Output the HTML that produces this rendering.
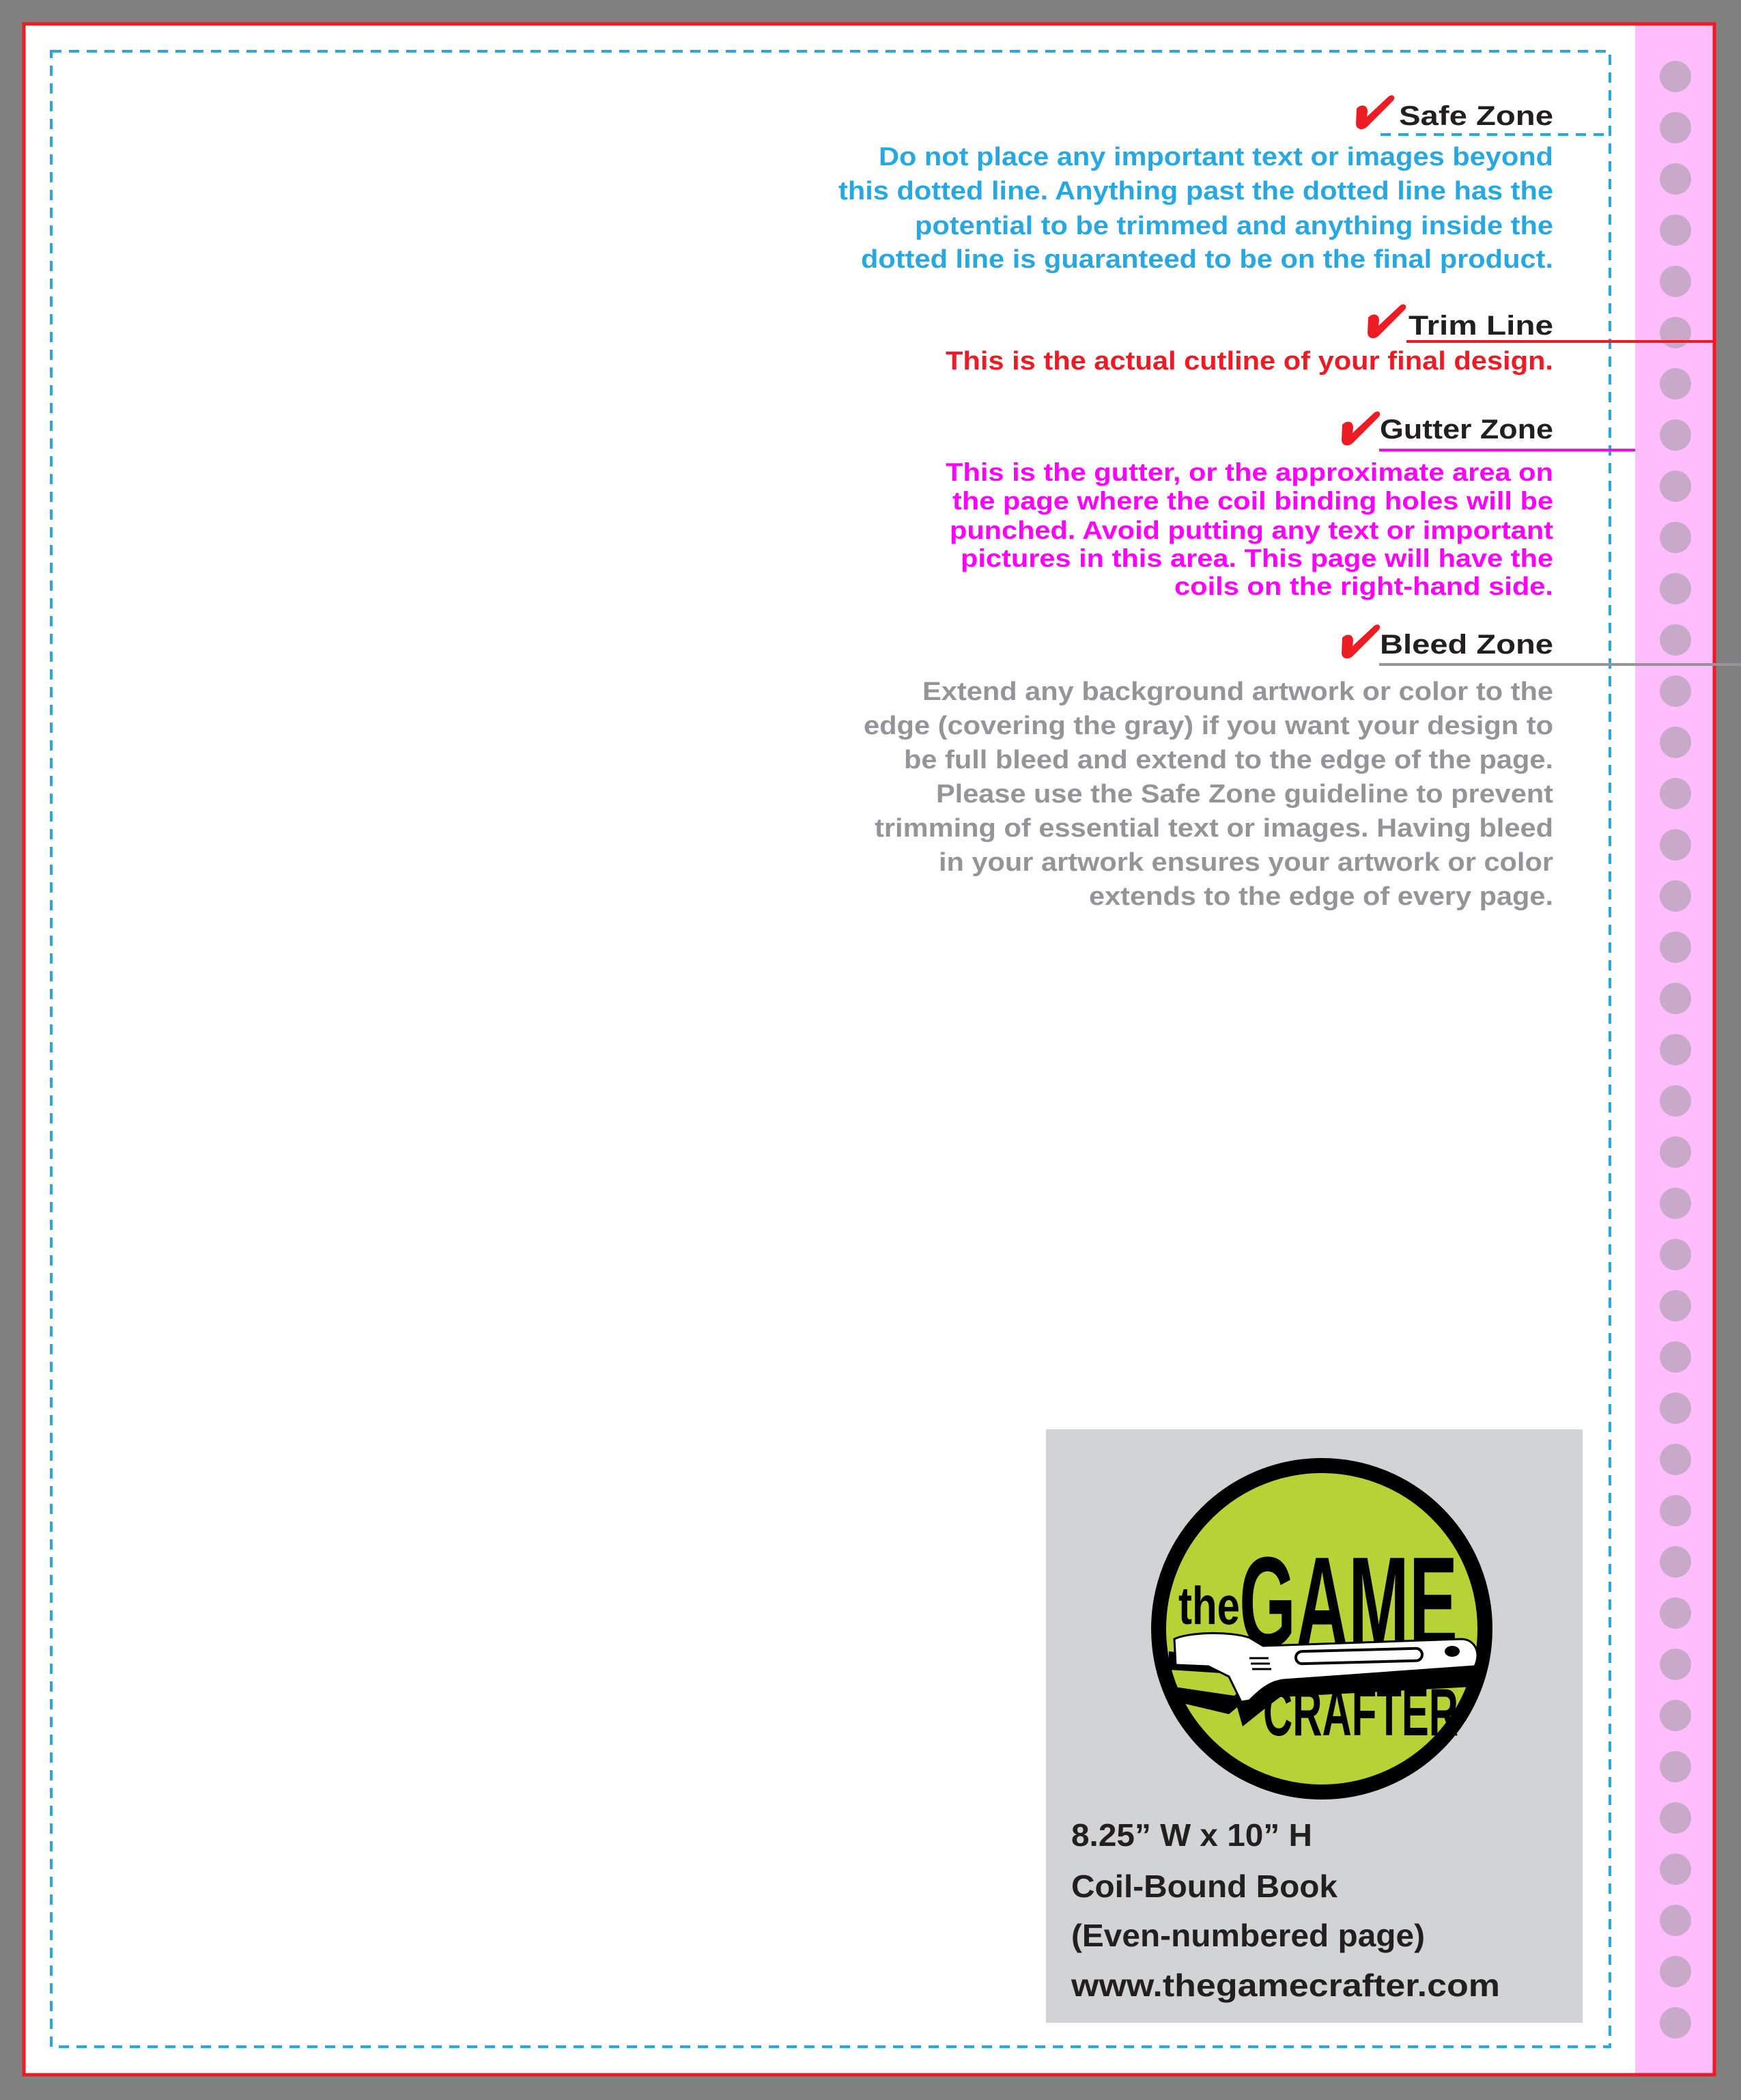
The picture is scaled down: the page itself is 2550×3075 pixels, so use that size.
<!DOCTYPE html>
<html><head><meta charset="utf-8"><style>
html,body{margin:0;padding:0;background:#808080;}
svg{display:block}
text{font-family:"Liberation Sans",Arial,sans-serif;font-weight:bold}
</style></head><body>
<svg width="2550" height="3075" viewBox="0 0 2550 3075" xmlns="http://www.w3.org/2000/svg">
<rect x="0" y="0" width="2550" height="3075" fill="#808080"/>
<rect x="35" y="35" width="2476" height="3003" fill="#ffffff"/>
<rect x="2395" y="35" width="116" height="3003" fill="#ffbdfb"/>
<g fill="#c9a9c9">
<circle cx="2454" cy="112" r="23"/><circle cx="2454" cy="187" r="23"/><circle cx="2454" cy="262" r="23"/><circle cx="2454" cy="337" r="23"/><circle cx="2454" cy="412" r="23"/><circle cx="2454" cy="487" r="23"/><circle cx="2454" cy="562" r="23"/><circle cx="2454" cy="637" r="23"/><circle cx="2454" cy="712" r="23"/><circle cx="2454" cy="787" r="23"/><circle cx="2454" cy="862" r="23"/><circle cx="2454" cy="937" r="23"/><circle cx="2454" cy="1012" r="23"/><circle cx="2454" cy="1087" r="23"/><circle cx="2454" cy="1162" r="23"/><circle cx="2454" cy="1237" r="23"/><circle cx="2454" cy="1312" r="23"/><circle cx="2454" cy="1387" r="23"/><circle cx="2454" cy="1462" r="23"/><circle cx="2454" cy="1537" r="23"/><circle cx="2454" cy="1612" r="23"/><circle cx="2454" cy="1687" r="23"/><circle cx="2454" cy="1762" r="23"/><circle cx="2454" cy="1837" r="23"/><circle cx="2454" cy="1912" r="23"/><circle cx="2454" cy="1987" r="23"/><circle cx="2454" cy="2062" r="23"/><circle cx="2454" cy="2137" r="23"/><circle cx="2454" cy="2212" r="23"/><circle cx="2454" cy="2287" r="23"/><circle cx="2454" cy="2362" r="23"/><circle cx="2454" cy="2437" r="23"/><circle cx="2454" cy="2512" r="23"/><circle cx="2454" cy="2587" r="23"/><circle cx="2454" cy="2662" r="23"/><circle cx="2454" cy="2737" r="23"/><circle cx="2454" cy="2812" r="23"/><circle cx="2454" cy="2887" r="23"/><circle cx="2454" cy="2962" r="23"/>
</g>
<rect x="35" y="35" width="2476" height="3003" fill="none" stroke="#ed1c24" stroke-width="5"/>
<rect x="75" y="75" width="2283" height="2922" fill="none" stroke="#29a8e0" stroke-width="4" stroke-dasharray="15 11"/>
<line x1="2022" y1="197" x2="2358" y2="197" stroke="#29a8e0" stroke-width="4" stroke-dasharray="15 11"/>
<line x1="2060" y1="500" x2="2511" y2="500" stroke="#ed1c24" stroke-width="4"/>
<line x1="2020" y1="659" x2="2395" y2="659" stroke="#ff00ff" stroke-width="4"/>
<line x1="2020" y1="973" x2="2550" y2="973" stroke="#939598" stroke-width="4"/>
<g fill="#ed1c24">
<path transform="translate(1983,137)" d="M4,22 C10,15 20,16 20,26 L19,34 L50,5 C55,0 62,3 58,10 L20,48 C13,55 3,53 3,44 Z"/>
<path transform="translate(2000,443)" d="M4,22 C10,15 20,16 20,26 L19,34 L50,5 C55,0 62,3 58,10 L20,48 C13,55 3,53 3,44 Z"/>
<path transform="translate(1962,600)" d="M4,22 C10,15 20,16 20,26 L19,34 L50,5 C55,0 62,3 58,10 L20,48 C13,55 3,53 3,44 Z"/>
<path transform="translate(1962,912)" d="M4,22 C10,15 20,16 20,26 L19,34 L50,5 C55,0 62,3 58,10 L20,48 C13,55 3,53 3,44 Z"/>
</g>
<g text-anchor="end" fill="#231f20" font-size="40">
<text x="2275" y="183" textLength="226" lengthAdjust="spacingAndGlyphs">Safe Zone</text>
<text x="2275" y="490" textLength="212" lengthAdjust="spacingAndGlyphs">Trim Line</text>
<text x="2275" y="642" textLength="254" lengthAdjust="spacingAndGlyphs">Gutter Zone</text>
<text x="2275" y="957" textLength="254" lengthAdjust="spacingAndGlyphs">Bleed Zone</text>
</g>
<g text-anchor="end" fill="#29a8e0" font-size="38" lengthAdjust="spacingAndGlyphs">
<text x="2275" y="242" textLength="988" lengthAdjust="spacingAndGlyphs">Do not place any important text or images beyond</text>
<text x="2275" y="292" textLength="1047" lengthAdjust="spacingAndGlyphs">this dotted line. Anything past the dotted line has the</text>
<text x="2275" y="343" textLength="935" lengthAdjust="spacingAndGlyphs">potential to be trimmed and anything inside the</text>
<text x="2275" y="392" textLength="1014" lengthAdjust="spacingAndGlyphs">dotted line is guaranteed to be on the final product.</text>
</g>
<text x="2275" y="541" text-anchor="end" fill="#ed1c24" font-size="38" textLength="890" lengthAdjust="spacingAndGlyphs">This is the actual cutline of your final design.</text>
<g text-anchor="end" fill="#ff00ff" font-size="37">
<text x="2275" y="704" textLength="890" lengthAdjust="spacingAndGlyphs">This is the gutter, or the approximate area on</text>
<text x="2275" y="746" textLength="880" lengthAdjust="spacingAndGlyphs">the page where the coil binding holes will be</text>
<text x="2275" y="789" textLength="884" lengthAdjust="spacingAndGlyphs">punched. Avoid putting any text or important</text>
<text x="2275" y="830" textLength="868" lengthAdjust="spacingAndGlyphs">pictures in this area. This page will have the</text>
<text x="2275" y="871" textLength="555" lengthAdjust="spacingAndGlyphs">coils on the right-hand side.</text>
</g>
<g text-anchor="end" fill="#939598" font-size="38">
<text x="2275" y="1025" textLength="924" lengthAdjust="spacingAndGlyphs">Extend any background artwork or color to the</text>
<text x="2275" y="1075" textLength="1010" lengthAdjust="spacingAndGlyphs">edge (covering the gray) if you want your design to</text>
<text x="2275" y="1125" textLength="951" lengthAdjust="spacingAndGlyphs">be full bleed and extend to the edge of the page.</text>
<text x="2275" y="1175" textLength="904" lengthAdjust="spacingAndGlyphs">Please use the Safe Zone guideline to prevent</text>
<text x="2275" y="1225" textLength="994" lengthAdjust="spacingAndGlyphs">trimming of essential text or images. Having bleed</text>
<text x="2275" y="1275" textLength="900" lengthAdjust="spacingAndGlyphs">in your artwork ensures your artwork or color</text>
<text x="2275" y="1325" textLength="680" lengthAdjust="spacingAndGlyphs">extends to the edge of every page.</text>
</g>
<rect x="1532" y="2093" width="786" height="869" fill="#d1d3d4"/>
<circle cx="1936" cy="2385" r="239" fill="#b5d334" stroke="#000" stroke-width="22"/>
<text x="1726" y="2378" font-size="78" fill="#000" textLength="90" lengthAdjust="spacingAndGlyphs" style="font-family:'Liberation Sans Narrow','Liberation Sans',sans-serif">the</text>
<text x="1815" y="2412" font-size="190" fill="#000" textLength="320" lengthAdjust="spacingAndGlyphs" style="font-family:'Liberation Sans Narrow','Liberation Sans',sans-serif">GAME</text>
<text x="1850" y="2541" font-size="98" fill="#000" textLength="286" lengthAdjust="spacingAndGlyphs" style="font-family:'Liberation Sans Narrow','Liberation Sans',sans-serif">CRAFTER</text>
<path d="M1712,2418 L1712,2445 L1790,2450 L1825,2465 L1808,2483 L1720,2470 L1715,2490 L1800,2510 L1812,2500 L1820,2528 L1855,2500 L1875,2485 L2155,2470 L2160,2440 L1845,2448 L1832,2432 Z" fill="#000"/>
<path d="M1720,2400 C1740,2390 1800,2388 1830,2398 L1850,2410 L2140,2400 C2160,2400 2170,2420 2160,2440 L1880,2460 C1860,2462 1845,2475 1830,2490 L1818,2492 L1800,2455 L1770,2440 L1722,2438 Z" fill="#fff" stroke="#000" stroke-width="3"/>
<rect x="1898" y="2416" width="185" height="18" rx="9" fill="#fff" stroke="#000" stroke-width="4" transform="rotate(-1.5 1990 2425)"/>
<ellipse cx="2127" cy="2418" rx="11" ry="8" fill="#000"/>
<g stroke="#000" stroke-width="3" fill="none"><path d="M1830,2428 L1858,2428"/><path d="M1832,2436 L1860,2436"/><path d="M1834,2444 L1862,2444"/></g>
<g fill="#231f20" font-size="46">
<text x="1569" y="2703" textLength="353" lengthAdjust="spacingAndGlyphs">8.25” W x 10” H</text>
<text x="1569" y="2778" textLength="390" lengthAdjust="spacingAndGlyphs">Coil-Bound Book</text>
<text x="1569" y="2850" textLength="518" lengthAdjust="spacingAndGlyphs">(Even-numbered page)</text>
<text x="1569" y="2923" textLength="628" lengthAdjust="spacingAndGlyphs">www.thegamecrafter.com</text>
</g>
</svg>
</body></html>
